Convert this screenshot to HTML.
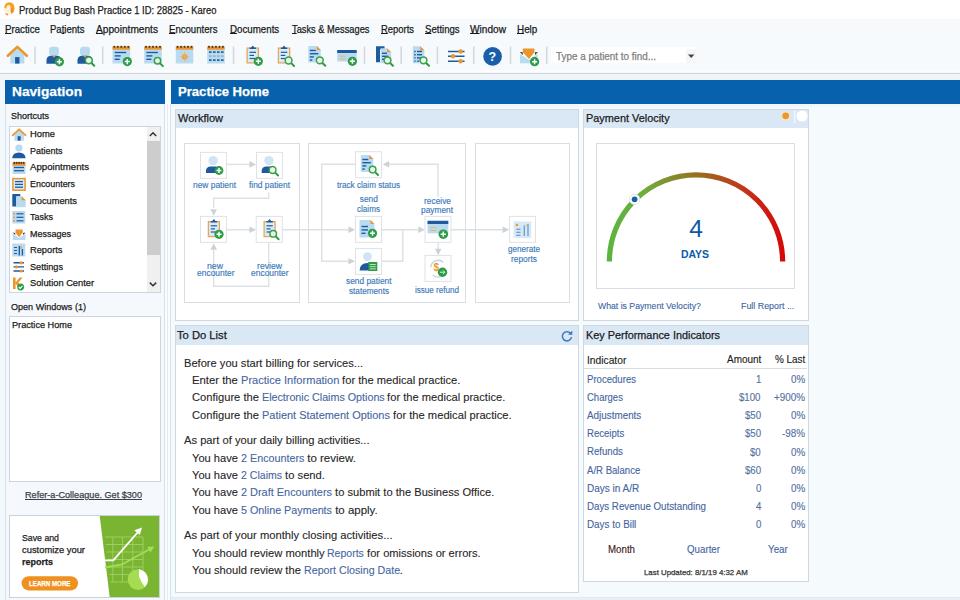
<!DOCTYPE html>
<html><head><meta charset="utf-8"><title>Product Bug Bash Practice 1 ID: 28825 - Kareo</title>
<style>
html,body{margin:0;padding:0;}
body{width:960px;height:600px;overflow:hidden;position:relative;background:#f3f8fd;font-family:"Liberation Sans",sans-serif;color:#1a1a1a;}
.t{position:absolute;white-space:pre;transform-origin:0 50%;-webkit-text-stroke:0.25px currentColor;}
.b{position:absolute;box-sizing:border-box;}
u{text-decoration-thickness:1px;text-underline-offset:0.3px;}
svg{position:absolute;left:0;top:0;}
</style></head><body>
<div class="b" style="left:0px;top:0px;width:960px;height:20px;background:#ffffff;"></div>
<div class="b" style="left:0px;top:19px;width:960px;height:53px;background:#f6fafd;"></div>
<div class="b" style="left:0px;top:70px;width:960px;height:2px;background:#fbfcfe;"></div>
<div class="b" style="left:0px;top:72.7px;width:960px;height:1.2000000000000028px;background:#d2d5d9;"></div>
<div class="b" style="left:0px;top:73.9px;width:960px;height:6.099999999999994px;background:#eff4f9;"></div>
<div class="b" style="left:551px;top:47px;width:145px;height:16.200000000000003px;background:#ffffff;"></div>
<div class="b" style="left:686px;top:48.5px;width:9.5px;height:14.0px;background:#f5f6f8;"></div>
<div class="b" style="left:5px;top:80px;width:160px;height:24px;background:#0761ad;"></div>
<div class="b" style="left:5px;top:104px;width:160px;height:496px;background:#f5f9fd;border:1px solid #d6e0eb;border-top:none;border-bottom:none;"></div>
<div class="b" style="left:9px;top:125.5px;width:152px;height:167.5px;background:#ffffff;border:1px solid #cbd6e2;"></div>
<div class="b" style="left:147px;top:126.5px;width:13px;height:165.5px;background:#f0f0f0;"></div>
<div class="b" style="left:147px;top:141px;width:13px;height:114px;background:#cdcdcd;"></div>
<div class="b" style="left:9px;top:316px;width:152px;height:166px;background:#ffffff;border:1px solid #cbd6e2;"></div>
<div class="b" style="left:9px;top:515px;width:151px;height:83px;background:#ffffff;border:1px solid #c8d2dc;"></div>
<div class="b" style="left:165px;top:80px;width:5px;height:520px;background:#fafcff;"></div>
<div class="b" style="left:167px;top:104px;width:1px;height:496px;background:#e4e9f4;"></div>
<div class="b" style="left:170.5px;top:80px;width:789.5px;height:24px;background:#0761ad;"></div>
<div class="b" style="left:170px;top:104px;width:790px;height:496px;background:#f5fafd;"></div>
<div class="b" style="left:171px;top:596.7px;width:789px;height:1.0px;background:#e3e9f0;"></div>
<div class="b" style="left:171px;top:597.7px;width:789px;height:2.2999999999999545px;background:#e9eff6;"></div>
<div class="b" style="left:170px;top:104px;width:1px;height:496px;background:#d5e2ef;"></div>
<div class="b" style="left:171px;top:104px;width:789px;height:2.5px;background:#eef7fd;"></div>
<div class="b" style="left:174.7px;top:108.5px;width:404.3px;height:212.5px;background:#ffffff;border:1px solid #cfd8e2;"></div>
<div class="b" style="left:175.7px;top:109.5px;width:402.3px;height:18.5px;background:#dae8f6;"></div>
<div class="b" style="left:582.8px;top:108.5px;width:225.9000000000001px;height:212.5px;background:#ffffff;border:1px solid #cfd8e2;"></div>
<div class="b" style="left:583.8px;top:109.5px;width:223.9000000000001px;height:18.5px;background:#dae8f6;"></div>
<div class="b" style="left:174.7px;top:325.3px;width:404.3px;height:267.7px;background:#ffffff;border:1px solid #cfd8e2;"></div>
<div class="b" style="left:175.7px;top:326.3px;width:402.3px;height:18.5px;background:#dae8f6;"></div>
<div class="b" style="left:582.8px;top:325.3px;width:225.9000000000001px;height:256.7px;background:#ffffff;border:1px solid #cfd8e2;"></div>
<div class="b" style="left:583.8px;top:326.3px;width:223.9000000000001px;height:18.5px;background:#dae8f6;"></div>
<div class="b" style="left:184px;top:143px;width:116px;height:160px;border:1px solid #d9dee3;"></div>
<div class="b" style="left:308px;top:143px;width:158px;height:160px;border:1px solid #d9dee3;"></div>
<div class="b" style="left:475px;top:143px;width:95px;height:160px;border:1px solid #d9dee3;"></div>
<div class="b" style="left:596px;top:143px;width:199px;height:145.5px;border:1px solid #d9dee3;"></div>
<div class="b" style="left:584px;top:368px;width:223px;height:1.3000000000000114px;background:#d9dcdf;"></div>
<svg width="960" height="600" viewBox="0 0 960 600">
<defs><linearGradient id="gg" x1="609" y1="0" x2="783" y2="0" gradientUnits="userSpaceOnUse"><stop offset="0" stop-color="#5db33f"/><stop offset="0.2" stop-color="#6dae3c"/><stop offset="0.5" stop-color="#98701f"/><stop offset="0.8" stop-color="#c4301a"/><stop offset="1" stop-color="#d60808"/></linearGradient></defs>
<circle cx="9.2" cy="8.8" r="5.2" fill="#fdf0d9"/><path d="M4.3 7.8Q4.6 2.6 9.4 2.2Q14.6 2.8 14.6 8.4Q14.400 12.200 11.700 14.200Q9.800 11.200 10.700 8.200Q11 5.400 8.600 5Q6.300 5.200 6.300 7.900Q5.300 8.600 4.300 7.800Z" fill="#f1a124"/><path d="M10.9 7.500q1.900 0.300 2.200 2.600q-0.200 2-1.500 3.200q-1.300-2.600-0.700-5.800z" fill="#f08c1c"/><ellipse cx="6.800" cy="14.300" rx="1.700" ry="0.900" fill="#dc9a3a" transform="rotate(25 6.800 14.300)"/><rect x="34.25" y="46.5" width="1.5" height="17.5" fill="#d2d7dc"/><rect x="102.0" y="46.5" width="1.5" height="17.5" fill="#d2d7dc"/><rect x="232.85" y="46.5" width="1.5" height="17.5" fill="#d2d7dc"/><rect x="363.75" y="46.5" width="1.5" height="17.5" fill="#d2d7dc"/><rect x="400.45" y="46.5" width="1.5" height="17.5" fill="#d2d7dc"/><rect x="436.65" y="46.5" width="1.5" height="17.5" fill="#d2d7dc"/><rect x="473.05" y="46.5" width="1.5" height="17.5" fill="#d2d7dc"/><rect x="509.75" y="46.5" width="1.5" height="17.5" fill="#d2d7dc"/><rect x="545.95" y="46.5" width="1.5" height="17.5" fill="#d2d7dc"/><g transform="translate(6.8,45.6) scale(1.0)"><path d="M3.5 9.5V18H17.5V9.5L10.5 3z" fill="#b9dbf1"/><rect x="8.3" y="11.5" width="4.4" height="6.5" fill="#1d5a9e"/><path d="M1 10.2L10.5 1.3L20 10.2" fill="none" stroke="#eb962c" stroke-width="2.6" stroke-linejoin="round" stroke-linecap="round"/></g><rect x="49" y="46.8" width="10" height="9" rx="3" fill="#b9dbf1"/><path d="M46.5 63.8v-3.5q0-4 4-4.5h7q4 0.5 4 4.5v3.5z" fill="#1d5a9e"/><path d="M52 55.8h4l-2 2z" fill="#eb962c"/><circle cx="59.4" cy="61.8" r="4.6" fill="#2c9c45"/><path d="M56.87 61.8H61.93M59.4 59.269999999999996V64.33" stroke="#fff" stroke-width="1.5"/><rect x="80" y="46.8" width="10" height="9" rx="3" fill="#b9dbf1"/><path d="M77.5 63.8v-3.5q0-4 4-4.5h7q4 0.5 4 4.5v3.5z" fill="#1d5a9e"/><path d="M83 55.8h4l-2 2z" fill="#eb962c"/><path d="M91.17999999999999 62.68L94.27999999999999 65.78" stroke="#2c9c45" stroke-width="2" stroke-linecap="round"/><circle cx="88.8" cy="60.3" r="3.4" fill="#e9f5ea" stroke="#3aa04a" stroke-width="1.5"/><rect x="112.5" y="47.5" width="17.6" height="16" fill="#b9dbf1"/><rect x="112.5" y="46.5" width="17.6" height="3.2" fill="#eb962c"/><circle cx="114.3" cy="46.8" r="1.1" fill="#5a3a18"/><circle cx="117.8" cy="46.8" r="1.1" fill="#5a3a18"/><circle cx="121.3" cy="46.8" r="1.1" fill="#5a3a18"/><circle cx="124.8" cy="46.8" r="1.1" fill="#5a3a18"/><circle cx="128.3" cy="46.8" r="1.1" fill="#5a3a18"/><path d="M114.7 52.5h11.5" stroke="#1d5a9e" stroke-width="1.4"/><path d="M114.7 55.9h6" stroke="#1d5a9e" stroke-width="1.4"/><path d="M114.7 59.3h5" stroke="#1d5a9e" stroke-width="1.4"/><circle cx="127.3" cy="61.6" r="4.6" fill="#2c9c45"/><path d="M124.77 61.6H129.82999999999998M127.3 59.07V64.13" stroke="#fff" stroke-width="1.5"/><rect x="144.2" y="47.5" width="17.6" height="16" fill="#b9dbf1"/><rect x="144.2" y="46.5" width="17.6" height="3.2" fill="#eb962c"/><circle cx="146.0" cy="46.8" r="1.1" fill="#5a3a18"/><circle cx="149.5" cy="46.8" r="1.1" fill="#5a3a18"/><circle cx="153.0" cy="46.8" r="1.1" fill="#5a3a18"/><circle cx="156.5" cy="46.8" r="1.1" fill="#5a3a18"/><circle cx="160.0" cy="46.8" r="1.1" fill="#5a3a18"/><path d="M146.4 52.5h11.5" stroke="#1d5a9e" stroke-width="1.4"/><path d="M146.4 55.9h6" stroke="#1d5a9e" stroke-width="1.4"/><path d="M146.4 59.3h5" stroke="#1d5a9e" stroke-width="1.4"/><path d="M159.74 63.04L162.84 66.14" stroke="#2c9c45" stroke-width="2" stroke-linecap="round"/><circle cx="157.5" cy="60.8" r="3.2" fill="#e9f5ea" stroke="#3aa04a" stroke-width="1.5"/><rect x="175.8" y="47.5" width="17.5" height="16" fill="#b9dbf1"/><rect x="175.8" y="46.5" width="17.5" height="3.2" fill="#eb962c"/><circle cx="177.60000000000002" cy="46.8" r="1.1" fill="#5a3a18"/><circle cx="181.07500000000002" cy="46.8" r="1.1" fill="#5a3a18"/><circle cx="184.55" cy="46.8" r="1.1" fill="#5a3a18"/><circle cx="188.02500000000003" cy="46.8" r="1.1" fill="#5a3a18"/><circle cx="191.50000000000003" cy="46.8" r="1.1" fill="#5a3a18"/><circle cx="184.6" cy="56.8" r="2.6" fill="#eb962c"/><path d="M184.6 52v9.6M179.8 56.8h9.6M181.2 53.4l6.8 6.8M188 53.4l-6.8 6.8" stroke="#f0b060" stroke-width="0.9"/><rect x="207.2" y="47.5" width="17.5" height="16" fill="#b9dbf1"/><rect x="207.2" y="46.5" width="17.5" height="3.2" fill="#eb962c"/><circle cx="209.0" cy="46.8" r="1.1" fill="#5a3a18"/><circle cx="212.475" cy="46.8" r="1.1" fill="#5a3a18"/><circle cx="215.95" cy="46.8" r="1.1" fill="#5a3a18"/><circle cx="219.425" cy="46.8" r="1.1" fill="#5a3a18"/><circle cx="222.9" cy="46.8" r="1.1" fill="#5a3a18"/><rect x="209" y="51.3" width="2.6" height="1.6" fill="#1d5a9e"/><rect x="213" y="51.3" width="2.6" height="1.6" fill="#1d5a9e"/><rect x="217" y="51.3" width="2.6" height="1.6" fill="#1d5a9e"/><rect x="221" y="51.3" width="2.6" height="1.6" fill="#1d5a9e"/><rect x="209" y="55.3" width="2.6" height="1.6" fill="#9ab0b8"/><rect x="213" y="55.3" width="2.6" height="1.6" fill="#9ab0b8"/><rect x="217" y="55.3" width="2.6" height="1.6" fill="#9ab0b8"/><rect x="221" y="55.3" width="2.6" height="1.6" fill="#9ab0b8"/><rect x="209" y="59.3" width="2.6" height="1.6" fill="#1d5a9e"/><rect x="213" y="59.3" width="2.6" height="1.6" fill="#1d5a9e"/><rect x="217" y="59.3" width="2.6" height="1.6" fill="#1d5a9e"/><rect x="221" y="59.3" width="2.6" height="1.6" fill="#1d5a9e"/><rect x="247.1" y="48.1" width="11.3" height="14.8" fill="#d9ebf8" stroke="#e9a55a" stroke-width="1.3"/><path d="M249.55 49.1h6.4v-1.6h-1.6l-1.6-2l-1.6 2h-1.6z" fill="#1d5a9e"/><path d="M249.5 52.3h6.5" stroke="#1d5a9e" stroke-width="1.2"/><path d="M249.5 55.4h4.5" stroke="#1d5a9e" stroke-width="1.2"/><path d="M249.5 58.5h5.5" stroke="#1d5a9e" stroke-width="1.2"/><circle cx="258.3" cy="61.3" r="4.6" fill="#2c9c45"/><path d="M255.77 61.3H260.83M258.3 58.769999999999996V63.83" stroke="#fff" stroke-width="1.5"/><rect x="278.40000000000003" y="48.1" width="11.3" height="14.8" fill="#d9ebf8" stroke="#e9a55a" stroke-width="1.3"/><path d="M280.85 49.1h6.4v-1.6h-1.6l-1.6-2l-1.6 2h-1.6z" fill="#1d5a9e"/><path d="M280.8 52.3h6.5" stroke="#1d5a9e" stroke-width="1.2"/><path d="M280.8 55.4h4.5" stroke="#1d5a9e" stroke-width="1.2"/><path d="M280.8 58.5h5.5" stroke="#1d5a9e" stroke-width="1.2"/><path d="M290.98 62.88L294.08000000000004 65.98" stroke="#2c9c45" stroke-width="2" stroke-linecap="round"/><circle cx="288.6" cy="60.5" r="3.4" fill="#e9f5ea" stroke="#3aa04a" stroke-width="1.5"/><path d="M308.3 46h8.5l4 4v12.5h-12.5z" fill="#b9dbf1"/><path d="M316.8 46l4 4h-4z" fill="#eb962c"/><path d="M309.8 50.5h6" stroke="#1d5a9e" stroke-width="1.4"/><path d="M309.8 53.7h8.5" stroke="#1d5a9e" stroke-width="1.4"/><path d="M309.8 56.9h4" stroke="#1d5a9e" stroke-width="1.4"/><path d="M309.8 60.1h2.5" stroke="#1d5a9e" stroke-width="1.4"/><path d="M322.18 62.68L325.28000000000003 65.78" stroke="#2c9c45" stroke-width="2" stroke-linecap="round"/><circle cx="319.8" cy="60.3" r="3.4" fill="#e9f5ea" stroke="#3aa04a" stroke-width="1.5"/><rect x="337.2" y="50" width="19.5" height="11.5" fill="#b9dbf1"/><rect x="337.2" y="50" width="19.5" height="3" fill="#1d5a9e"/><path d="M339.5 56.2h6M339.5 58.8h6" stroke="#e8b878" stroke-width="1.2"/><circle cx="352.4" cy="61.3" r="4.6" fill="#2c9c45"/><path d="M349.87 61.3H354.92999999999995M352.4 58.769999999999996V63.83" stroke="#fff" stroke-width="1.5"/><path d="M376 46.3h8.5v3h-4.5v13h-4z" fill="#1d5a9e"/><path d="M380.6 48.3h6.5l4 4v11h-10.5z" fill="#b9dbf1"/><path d="M387.1 48.3l4 4h-4z" fill="#eb962c"/><path d="M382 53.3h5" stroke="#1d5a9e" stroke-width="1.4"/><path d="M382 56.3h6.5" stroke="#1d5a9e" stroke-width="1.4"/><path d="M382 59.3h4" stroke="#1d5a9e" stroke-width="1.4"/><path d="M389.88 62.68L392.98 65.78" stroke="#2c9c45" stroke-width="2" stroke-linecap="round"/><circle cx="387.5" cy="60.3" r="3.4" fill="#e9f5ea" stroke="#3aa04a" stroke-width="1.5"/><path d="M412.8 46.3h7.5l4 4v13h-11.5z" fill="#b9dbf1"/><path d="M420.3 46.3l4 4h-4z" fill="#eb962c"/><path d="M414.2 51.5h1.5" stroke="#1d5a9e" stroke-width="1.4"/><path d="M414.2 54.7h1.5" stroke="#1d5a9e" stroke-width="1.4"/><path d="M414.2 57.9h1.5" stroke="#1d5a9e" stroke-width="1.4"/><path d="M414.2 61.1h1.5" stroke="#1d5a9e" stroke-width="1.4"/><path d="M417 51.5h5" stroke="#1d5a9e" stroke-width="1.4"/><path d="M417 54.7h5" stroke="#1d5a9e" stroke-width="1.4"/><path d="M417 57.9h4" stroke="#1d5a9e" stroke-width="1.4"/><path d="M417 61.1h2" stroke="#1d5a9e" stroke-width="1.4"/><path d="M425.88 62.68L428.98 65.78" stroke="#2c9c45" stroke-width="2" stroke-linecap="round"/><circle cx="423.5" cy="60.3" r="3.4" fill="#e9f5ea" stroke="#3aa04a" stroke-width="1.5"/><path d="M448 51.5h16.5M448 56.3h16.5M448 61.3h16.5" stroke="#1d5a9e" stroke-width="1.5"/><circle cx="460.6" cy="51.5" r="2.2" fill="#eb962c"/><circle cx="453" cy="56.3" r="2.2" fill="#eb962c"/><circle cx="460.6" cy="61.3" r="2.2" fill="#eb962c"/><circle cx="492.6" cy="56.4" r="9.3" fill="#1a5fa8"/><path d="M520 53.8l9 6.200l8.500-6.200v9.500h-17.500z" fill="#b9dbf1"/><path d="M519.800 52l3 0.300v2.600zM538 52l-3 0.300v2.600z" fill="#3a3a3a"/><path d="M522.800 48.600h11.600v3.600l-5.400 6.800l-6.200-6.800z" fill="#eb962c"/><circle cx="534.6" cy="61.7" r="4.6" fill="#2c9c45"/><path d="M532.07 61.7H537.13M534.6 59.17V64.23" stroke="#fff" stroke-width="1.5"/><path d="M688 54.5h6.4l-3.2 3.6z" fill="#444"/><path d="M570.6 333.5a4.6 4.6 0 1 0 0.9 3.6" fill="none" stroke="#3b78c0" stroke-width="1.5"/><path d="M572.3 330.5v4.3h-4.3z" fill="#3b78c0"/><path d="M149.8 136l3.2-3.2l3.2 3.2" fill="none" stroke="#333" stroke-width="1.5"/><path d="M149.8 282.6l3.2 3.2l3.2-3.2" fill="none" stroke="#333" stroke-width="1.5"/><g transform="translate(12,128.4) scale(0.68)"><path d="M3.5 9.5V18H17.5V9.5L10.5 3z" fill="#b9dbf1"/><rect x="8.3" y="11.5" width="4.4" height="6.5" fill="#1d5a9e"/><path d="M1 10.2L10.5 1.3L20 10.2" fill="none" stroke="#eb962c" stroke-width="2.6" stroke-linejoin="round" stroke-linecap="round"/></g><circle cx="18.9" cy="148" r="3.6" fill="#b9dbf1"/><path d="M12.2 158.2q0.3-5.6 6.7-5.8q6.4 0.2 6.7 5.8z" fill="#1d5a9e"/><rect x="12.5" y="163.5" width="13" height="10.5" fill="#b9dbf1"/><rect x="12.5" y="162.5" width="13" height="3.2" fill="#eb962c"/><circle cx="14.3" cy="162.8" r="1.1" fill="#5a3a18"/><circle cx="16.650000000000002" cy="162.8" r="1.1" fill="#5a3a18"/><circle cx="19.0" cy="162.8" r="1.1" fill="#5a3a18"/><circle cx="21.35" cy="162.8" r="1.1" fill="#5a3a18"/><circle cx="23.700000000000003" cy="162.8" r="1.1" fill="#5a3a18"/><path d="M14 167.5h10" stroke="#1d5a9e" stroke-width="1.3"/><path d="M14 170.7h10" stroke="#1d5a9e" stroke-width="1.3"/><rect x="12.9" y="178.6" width="12.2" height="11.6" fill="#d9ebf8" stroke="#eb962c" stroke-width="1.5"/><path d="M15 181.6h8" stroke="#1d5a9e" stroke-width="1.3"/><path d="M15 184.4h8" stroke="#1d5a9e" stroke-width="1.3"/><path d="M15 187.2h8" stroke="#1d5a9e" stroke-width="1.3"/><path d="M12.3 194h8v2.5h-4v10h-4z" fill="#1d5a9e"/><path d="M16.2 196.3h5.5l4 4v7h-9.5z" fill="#b9dbf1"/><path d="M21.7 196.3l4 4h-4z" fill="#eb962c"/><rect x="12.3" y="211" width="13" height="12.5" fill="#b9dbf1"/><path d="M16.5 213.8h7" stroke="#1d5a9e" stroke-width="1.2"/><path d="M16.5 217.3h7" stroke="#1d5a9e" stroke-width="1.2"/><path d="M16.5 220.8h7" stroke="#1d5a9e" stroke-width="1.2"/><rect x="13.2" y="213.1" width="1.6" height="1.6" fill="#eb962c"/><rect x="13.2" y="216.6" width="1.6" height="1.6" fill="#eb962c"/><rect x="13.2" y="220.1" width="1.6" height="1.6" fill="#eb962c"/><path d="M12.700 233.800l6.400 4.300l6.400-4.300v6.300h-12.800z" fill="#b9dbf1"/><path d="M12.600 232.600l2.600 0.300v2zM25.600 232.600l-2.600 0.300v2z" fill="#3a3a3a"/><path d="M15.500 229.600h7.200v3l-3.600 4.700l-3.600-4.700z" fill="#eb962c"/><rect x="12.3" y="243.5" width="13" height="13" fill="#b9dbf1"/><path d="M19.3 246v9.5M22.4 249v6.5" stroke="#1d5a9e" stroke-width="1.3"/><path d="M14 247.5h3M14 250.5h3M14 253.5h3" stroke="#1d5a9e" stroke-width="1"/><path d="M21 246v3" stroke="#eb962c" stroke-width="1.2"/><path d="M13.500 262.800h10.500M13.500 266.900h10.500M13.500 271h10.500" stroke="#1d5a9e" stroke-width="1.400"/><circle cx="21.3" cy="262.8" r="1.600" fill="#eb962c"/><circle cx="16.2" cy="266.9" r="1.600" fill="#eb962c"/><circle cx="21.3" cy="271" r="1.600" fill="#eb962c"/><path d="M13 277.5h2.6v5l4-5h3l-4.3 5.2l4.7 6.3h-3.2l-4.2-5.6v5.6h-2.6z" fill="#eb962c"/><circle cx="20.6" cy="287" r="3.4" fill="#2c9c45"/><path d="M18.8 287l1.4 1.4l2.2-2.6" fill="none" stroke="#fff" stroke-width="1.1"/><path d="M227 164.4H250" fill="none" stroke="#dbe1e5" stroke-width="1.4"/><path d="M256 164.4l-6.5-3.3v6.6z" fill="#cbd3d8"/><path d="M268.7 192.5V198.2H213.7V208" fill="none" stroke="#dbe1e5" stroke-width="1.4"/><path d="M213.7 215.8l-3.3-6.5h6.6z" fill="#cbd3d8"/><path d="M227 229.8H250" fill="none" stroke="#dbe1e5" stroke-width="1.4"/><path d="M256 229.8l-6.5-3.3v6.6z" fill="#cbd3d8"/><path d="M268.7 243V286.2H213.7V250" fill="none" stroke="#dbe1e5" stroke-width="1.4"/><path d="M213.7 243.3l-3.3 6.5h6.6z" fill="#cbd3d8"/><path d="M282 229.8H349" fill="none" stroke="#dbe1e5" stroke-width="1.4"/><path d="M355 229.8l-6.5-3.3v6.6z" fill="#cbd3d8"/><path d="M382 229.8H418" fill="none" stroke="#dbe1e5" stroke-width="1.4"/><path d="M424.8 229.8l-6.5-3.3v6.6z" fill="#cbd3d8"/><path d="M382 261.3H402.8V229.8" fill="none" stroke="#dbe1e5" stroke-width="1.4"/><path d="M438 196.7V164.2H389" fill="none" stroke="#dbe1e5" stroke-width="1.4"/><path d="M382.6 164.2l6.5-3.3v6.6z" fill="#cbd3d8"/><path d="M355 164.2H321.7V261.3H349" fill="none" stroke="#dbe1e5" stroke-width="1.4"/><path d="M355 261.3l-6.5-3.3v6.6z" fill="#cbd3d8"/><path d="M451 229.8H503" fill="none" stroke="#dbe1e5" stroke-width="1.4"/><path d="M509.2 229.8l-6.5-3.3v6.6z" fill="#cbd3d8"/><path d="M438.2 242.5V249" fill="none" stroke="#dbe1e5" stroke-width="1.4"/><path d="M438.2 255.3l-3.3-6.5h6.6z" fill="#cbd3d8"/><rect x="200.5" y="152.4" width="26" height="26" fill="#fff" stroke="#dfe2e6" stroke-width="1"/><rect x="256.5" y="152.4" width="26" height="26" fill="#fff" stroke="#dfe2e6" stroke-width="1"/><rect x="200.5" y="216.4" width="26" height="26" fill="#fff" stroke="#dfe2e6" stroke-width="1"/><rect x="256.2" y="216.4" width="26" height="26" fill="#fff" stroke="#dfe2e6" stroke-width="1"/><rect x="355.5" y="151.7" width="26" height="26" fill="#fff" stroke="#dfe2e6" stroke-width="1"/><rect x="355.5" y="216.4" width="26" height="26" fill="#fff" stroke="#dfe2e6" stroke-width="1"/><rect x="355.5" y="248.6" width="26" height="26" fill="#fff" stroke="#dfe2e6" stroke-width="1"/><rect x="425" y="216.4" width="26" height="26" fill="#fff" stroke="#dfe2e6" stroke-width="1"/><rect x="425" y="255.4" width="26" height="26" fill="#fff" stroke="#dfe2e6" stroke-width="1"/><rect x="509.5" y="216.4" width="26" height="26" fill="#fff" stroke="#dfe2e6" stroke-width="1"/><circle cx="213.2" cy="160.6" r="4.7" fill="#cfe5f5"/><path d="M206 173.1v-2.2q0-4 4-4.5h6q4 0.5 4 4.5v2.2z" fill="#1d5a9e"/><circle cx="219" cy="170.5" r="4.4" fill="#2c9c45"/><path d="M216.58 170.5H221.42M219 168.08V172.92" stroke="#fff" stroke-width="1.5"/><circle cx="268.9" cy="160.6" r="4.7" fill="#cfe5f5"/><path d="M261.7 173.1v-2.2q0-4 4-4.5h6q4 0.5 4 4.5v2.2z" fill="#1d5a9e"/><path d="M274.98 172.38L278.08000000000004 175.48" stroke="#2c9c45" stroke-width="2" stroke-linecap="round"/><circle cx="272.6" cy="170" r="3.4" fill="#e9f5ea" stroke="#3aa04a" stroke-width="1.5"/><rect x="208.4" y="221.6" width="11.0" height="15.0" fill="#d9ebf8" stroke="#e9a55a" stroke-width="1.3"/><path d="M210.70000000000002 222.6h6.4v-1.6h-1.6l-1.6-2l-1.6 2h-1.6z" fill="#1d5a9e"/><path d="M210.8 225.8h6.199999999999999" stroke="#1d5a9e" stroke-width="1.2"/><path d="M210.8 228.9h4.199999999999999" stroke="#1d5a9e" stroke-width="1.2"/><path d="M210.8 232.0h5.199999999999999" stroke="#1d5a9e" stroke-width="1.2"/><circle cx="219" cy="234.3" r="4.6" fill="#2c9c45"/><path d="M216.47 234.3H221.53M219 231.77V236.83" stroke="#fff" stroke-width="1.5"/><rect x="264.1" y="221.6" width="11.0" height="15.0" fill="#d9ebf8" stroke="#e9a55a" stroke-width="1.3"/><path d="M266.40000000000003 222.6h6.4v-1.6h-1.6l-1.6-2l-1.6 2h-1.6z" fill="#1d5a9e"/><path d="M266.5 225.8h6.199999999999999" stroke="#1d5a9e" stroke-width="1.2"/><path d="M266.5 228.9h4.199999999999999" stroke="#1d5a9e" stroke-width="1.2"/><path d="M266.5 232.0h5.199999999999999" stroke="#1d5a9e" stroke-width="1.2"/><path d="M275.51 236.11L278.61 239.21" stroke="#2c9c45" stroke-width="2" stroke-linecap="round"/><circle cx="273.2" cy="233.8" r="3.3" fill="#e9f5ea" stroke="#3aa04a" stroke-width="1.5"/><path d="M360.8 155h8.5l4 4v13h-12.5z" fill="#b9dbf1"/><path d="M369.3 155l4 4h-4z" fill="#eb962c"/><path d="M362.3 159.5h6" stroke="#1d5a9e" stroke-width="1.4"/><path d="M362.3 162.7h8.5" stroke="#1d5a9e" stroke-width="1.4"/><path d="M362.3 165.9h4" stroke="#1d5a9e" stroke-width="1.4"/><path d="M362.3 169.1h2.5" stroke="#1d5a9e" stroke-width="1.4"/><path d="M374.91 171.91L378.01000000000005 175.01" stroke="#2c9c45" stroke-width="2" stroke-linecap="round"/><circle cx="372.6" cy="169.6" r="3.3" fill="#e9f5ea" stroke="#3aa04a" stroke-width="1.5"/><path d="M359.5 220h11l4 4v13.5h-15z" fill="#b9dbf1"/><path d="M370.5 220l4 4h-4z" fill="#eb962c"/><path d="M361.5 226.5h6.5" stroke="#1d5a9e" stroke-width="1.4"/><path d="M361.5 229.9h6.5" stroke="#1d5a9e" stroke-width="1.4"/><path d="M361.5 233.3h4" stroke="#1d5a9e" stroke-width="1.4"/><circle cx="372.5" cy="233.3" r="4.6" fill="#2c9c45"/><path d="M369.97 233.3H375.03M372.5 230.77V235.83" stroke="#fff" stroke-width="1.5"/><circle cx="367.5" cy="256.6" r="4.4" fill="#cfe5f5"/><path d="M359.5 270.5q0.3-7.2 8-7.5q7.7 0.3 8 7.5z" fill="#1d5a9e"/><rect x="368.3" y="262" width="9" height="9" fill="#2c9c45"/><path d="M369.8 264.5h6M369.8 266.7h6M369.8 268.9h6" stroke="#cfe8d2" stroke-width="0.9"/><rect x="427.5" y="220.8" width="20.8" height="12.5" fill="#b9dbf1"/><rect x="427.5" y="220.8" width="20.8" height="3.2" fill="#1d5a9e"/><path d="M430 227.5h6.5M430 230.3h6.5" stroke="#e8b878" stroke-width="1.2"/><circle cx="443.3" cy="234.2" r="4.8" fill="#2c9c45"/><path d="M440.66 234.2H445.94M443.3 231.56V236.83999999999997" stroke="#fff" stroke-width="1.5"/><path d="M430.8 267.5a7.4 7.4 0 0 1 12.4-5.2M445.3 269.5a7.4 7.4 0 0 1-12.4 5.6" fill="none" stroke="#bfd3e2" stroke-width="1.3"/><text x="436.3" y="270.6" font-family="Liberation Sans, sans-serif" font-size="10" font-weight="700" fill="#eb962c" text-anchor="middle">$</text><circle cx="442.5" cy="272.2" r="4.7" fill="#2c9c45"/><path d="M440 272.2h4.6M443 270.4l1.8 1.8l-1.8 1.8" fill="none" stroke="#d8f0dc" stroke-width="1"/><rect x="513.600" y="221.500" width="17.600" height="16.500" fill="#d6e9f6"/><path d="M524.300 225.500v10.500M528 224v12" stroke="#6f9ccb" stroke-width="1.300"/><path d="M516.300 229.300h4.200M516.300 232.300h4.200M516.300 235.200h4.200" stroke="#4f86c0" stroke-width="1.100"/><circle cx="516.900" cy="225" r="1.300" fill="#eb962c"/><path d="M526.200 224v2.500" stroke="#f0c088" stroke-width="1"/><path d="M609.4 261.4A86.6 86.6 0 0 1 782.6 261.4" fill="none" stroke="url(#gg)" stroke-width="5.2"/><circle cx="634.6" cy="199.3" r="5.2" fill="#fff" stroke="#d5dde4" stroke-width="0.8"/><circle cx="634.6" cy="199.3" r="2.9" fill="#1a5fa8"/><circle cx="802" cy="116" r="5.6" fill="#fff"/><rect x="794" y="110" width="1.2" height="13" fill="#f4f9fd"/><circle cx="785.7" cy="115.8" r="4.6" fill="#f6e6cf"/><circle cx="785.7" cy="115.8" r="3.4" fill="#ee982a"/><path d="M99.7 516H159V597H109.7z" fill="#7ab532"/><path d="M112.8 537V582M122.5 537V582M132.8 537V582M143 537V582M104.9 537H143M105.8 544.5H143M106.7 552H143M107.7 559.5H143M108.6 567H143M109.5 574.5H143M110.4 582H143" stroke="#a3cf6a" stroke-width="0.9" fill="none"/><path d="M105 567.5L122 564.5L150 549" fill="none" stroke="#a6dc55" stroke-width="1.8"/><path d="M154.5 546.3l-7.2 0.6l3.2 5.6z" fill="#a6dc55"/><path d="M103.6 560.3H113.3L138 532" fill="none" stroke="#fff" stroke-width="1.8"/><path d="M142 527.6l-7.6 2.6l5.4 4.8z" fill="#fff"/><circle cx="138" cy="579.6" r="10.3" fill="#a5dc52"/><path d="M139 569q9 2.5 9 11.5q-0.5 4-3.2 6.500q-3.600-4.500-5.800-10.500z" fill="#fff"/><rect x="21.6" y="576.2" width="56.4" height="14.2" rx="7.1" fill="#f0901f"/></svg>
<div class="t" style="left:18.80px;top:2.56px;font-size:10.5px;line-height:14px;transform:scaleX(0.8975);">Product Bug Bash Practice 1 ID: 28825 - Kareo</div>
<div class="t" style="left:5.00px;top:22.43px;font-size:10.6px;line-height:14px;transform:scaleX(0.9143);"><u>P</u>ractice</div>
<div class="t" style="left:50.00px;top:22.43px;font-size:10.6px;line-height:14px;transform:scaleX(0.9012);">Pa<u>t</u>ients</div>
<div class="t" style="left:96.00px;top:22.43px;font-size:10.6px;line-height:14px;transform:scaleX(0.9571);"><u>A</u>ppointments</div>
<div class="t" style="left:169.00px;top:22.43px;font-size:10.6px;line-height:14px;transform:scaleX(0.9050);"><u>E</u>ncounters</div>
<div class="t" style="left:229.60px;top:22.43px;font-size:10.6px;line-height:14px;transform:scaleX(0.9180);"><u>D</u>ocuments</div>
<div class="t" style="left:291.50px;top:22.43px;font-size:10.6px;line-height:14px;transform:scaleX(0.8774);"><u>T</u>asks &amp; Messages</div>
<div class="t" style="left:381.00px;top:22.43px;font-size:10.6px;line-height:14px;transform:scaleX(0.8896);"><u>R</u>eports</div>
<div class="t" style="left:425.40px;top:22.43px;font-size:10.6px;line-height:14px;transform:scaleX(0.9038);"><u>S</u>ettings</div>
<div class="t" style="left:470.00px;top:22.43px;font-size:10.6px;line-height:14px;transform:scaleX(0.9552);"><u>W</u>indow</div>
<div class="t" style="left:516.70px;top:22.43px;font-size:10.6px;line-height:14px;transform:scaleX(0.9313);"><u>H</u>elp</div>
<div class="t" style="left:488.48px;top:48.67px;font-size:12.5px;line-height:16px;font-weight:700;color:#fff;-webkit-text-stroke:0;">?</div>
<div class="t" style="left:556.00px;top:50.10px;font-size:10.4px;line-height:14px;transform:scaleX(0.9511);color:#808080;">Type a patient to find...</div>
<div class="t" style="left:12.00px;top:82.62px;font-size:13.5px;line-height:18px;font-weight:700;transform:scaleX(1.0143);color:#fff;">Navigation</div>
<div class="t" style="left:178.00px;top:82.62px;font-size:13.5px;line-height:18px;font-weight:700;transform:scaleX(0.9702);color:#fff;">Practice Home</div>
<div class="t" style="left:11.00px;top:109.30px;font-size:9.8px;line-height:13px;transform:scaleX(0.9181);">Shortcuts</div>
<div class="t" style="left:30.00px;top:127.30px;font-size:9.8px;line-height:13px;transform:scaleX(0.9564);">Home</div>
<div class="t" style="left:30.00px;top:143.85px;font-size:9.8px;line-height:13px;transform:scaleX(0.9179);">Patients</div>
<div class="t" style="left:30.00px;top:160.40px;font-size:9.8px;line-height:13px;transform:scaleX(0.9849);">Appointments</div>
<div class="t" style="left:30.00px;top:176.95px;font-size:9.8px;line-height:13px;transform:scaleX(0.9079);">Encounters</div>
<div class="t" style="left:30.00px;top:193.50px;font-size:9.8px;line-height:13px;transform:scaleX(0.9483);">Documents</div>
<div class="t" style="left:30.00px;top:210.05px;font-size:9.8px;line-height:13px;transform:scaleX(0.9183);">Tasks</div>
<div class="t" style="left:30.00px;top:226.60px;font-size:9.8px;line-height:13px;transform:scaleX(0.9181);">Messages</div>
<div class="t" style="left:30.00px;top:243.15px;font-size:9.8px;line-height:13px;transform:scaleX(0.9472);">Reports</div>
<div class="t" style="left:30.00px;top:259.70px;font-size:9.8px;line-height:13px;transform:scaleX(0.9320);">Settings</div>
<div class="t" style="left:30.00px;top:276.25px;font-size:9.8px;line-height:13px;transform:scaleX(0.9477);">Solution Center</div>
<div class="t" style="left:11.00px;top:299.50px;font-size:9.8px;line-height:13px;transform:scaleX(0.9243);">Open Windows (1)</div>
<div class="t" style="left:11.70px;top:317.90px;font-size:9.8px;line-height:13px;transform:scaleX(0.9339);">Practice Home</div>
<div class="t" style="left:24.80px;top:487.90px;font-size:9.8px;line-height:13px;transform:scaleX(0.9300);color:#3c3e4a;text-decoration:underline;">Refer-a-Colleague. Get $300</div>
<div class="t" style="left:22.00px;top:531.10px;font-size:9.8px;line-height:13px;transform:scaleX(0.8936);color:#222;">Save and</div>
<div class="t" style="left:22.00px;top:543.10px;font-size:9.8px;line-height:13px;transform:scaleX(0.9561);color:#222;">customize your</div>
<div class="t" style="left:22.00px;top:555.10px;font-size:9.8px;line-height:13px;font-weight:700;transform:scaleX(0.9181);color:#222;">reports</div>
<div class="t" style="left:29.15px;top:578.84px;font-size:6.8px;line-height:9px;font-weight:700;transform:scaleX(0.9080);color:#fff;">LEARN MORE</div>
<div class="t" style="left:177.60px;top:111.25px;font-size:11.4px;line-height:15px;transform:scaleX(0.9651);">Workflow</div>
<div class="t" style="left:585.60px;top:111.25px;font-size:11.4px;line-height:15px;transform:scaleX(0.9568);">Payment Velocity</div>
<div class="t" style="left:176.90px;top:328.25px;font-size:11.4px;line-height:15px;transform:scaleX(0.9831);">To Do List</div>
<div class="t" style="left:585.80px;top:328.05px;font-size:11.4px;line-height:15px;transform:scaleX(0.9533);">Key Performance Indicators</div>
<div class="t" style="left:192.50px;top:179.92px;font-size:8.3px;line-height:11px;transform:scaleX(1.0133);color:#3b79ba;-webkit-text-stroke:0.15px currentColor;">new patient</div>
<div class="t" style="left:248.50px;top:179.92px;font-size:8.3px;line-height:11px;transform:scaleX(1.0100);color:#3b79ba;-webkit-text-stroke:0.15px currentColor;">find patient</div>
<div class="t" style="left:207.00px;top:261.32px;font-size:8.3px;line-height:11px;transform:scaleX(1.0503);color:#3b79ba;-webkit-text-stroke:0.15px currentColor;">new</div>
<div class="t" style="left:196.50px;top:267.82px;font-size:8.3px;line-height:11px;transform:scaleX(1.0188);color:#3b79ba;-webkit-text-stroke:0.15px currentColor;">encounter</div>
<div class="t" style="left:256.80px;top:261.32px;font-size:8.3px;line-height:11px;transform:scaleX(1.0423);color:#3b79ba;-webkit-text-stroke:0.15px currentColor;">review</div>
<div class="t" style="left:250.70px;top:267.82px;font-size:8.3px;line-height:11px;transform:scaleX(1.0188);color:#3b79ba;-webkit-text-stroke:0.15px currentColor;">encounter</div>
<div class="t" style="left:336.90px;top:179.92px;font-size:8.3px;line-height:11px;transform:scaleX(0.9829);color:#3b79ba;-webkit-text-stroke:0.15px currentColor;">track claim status</div>
<div class="t" style="left:359.80px;top:194.22px;font-size:8.3px;line-height:11px;color:#3b79ba;-webkit-text-stroke:0.15px currentColor;">send</div>
<div class="t" style="left:357.30px;top:204.12px;font-size:8.3px;line-height:11px;transform:scaleX(0.9781);color:#3b79ba;-webkit-text-stroke:0.15px currentColor;">claims</div>
<div class="t" style="left:423.50px;top:195.72px;font-size:8.3px;line-height:11px;transform:scaleX(1.0093);color:#3b79ba;-webkit-text-stroke:0.15px currentColor;">receive</div>
<div class="t" style="left:421.00px;top:205.22px;font-size:8.3px;line-height:11px;transform:scaleX(1.0054);color:#3b79ba;-webkit-text-stroke:0.15px currentColor;">payment</div>
<div class="t" style="left:346.20px;top:275.62px;font-size:8.3px;line-height:11px;transform:scaleX(1.0084);color:#3b79ba;-webkit-text-stroke:0.15px currentColor;">send patient</div>
<div class="t" style="left:349.00px;top:285.62px;font-size:8.3px;line-height:11px;transform:scaleX(0.9854);color:#3b79ba;-webkit-text-stroke:0.15px currentColor;">statements</div>
<div class="t" style="left:415.00px;top:285.32px;font-size:8.3px;line-height:11px;transform:scaleX(0.9734);color:#3b79ba;-webkit-text-stroke:0.15px currentColor;">issue refund</div>
<div class="t" style="left:507.70px;top:243.62px;font-size:8.3px;line-height:11px;transform:scaleX(0.9766);color:#3b79ba;-webkit-text-stroke:0.15px currentColor;">generate</div>
<div class="t" style="left:510.70px;top:253.82px;font-size:8.3px;line-height:11px;transform:scaleX(1.0067);color:#3b79ba;-webkit-text-stroke:0.15px currentColor;">reports</div>
<div class="t" style="left:689.18px;top:212.51px;font-size:24.5px;line-height:32px;color:#0c5aa6;-webkit-text-stroke:0;">4</div>
<div class="t" style="left:681.40px;top:247.39px;font-size:11px;line-height:14px;font-weight:700;transform:scaleX(0.9471);color:#0c5aa6;-webkit-text-stroke:0;">DAYS</div>
<div class="t" style="left:598.00px;top:300.24px;font-size:9.4px;line-height:12px;transform:scaleX(0.9263);color:#3864a3;-webkit-text-stroke:0.1px currentColor;">What is Payment Velocity?</div>
<div class="t" style="left:741.00px;top:300.24px;font-size:9.4px;line-height:12px;transform:scaleX(0.9470);color:#3864a3;-webkit-text-stroke:0.1px currentColor;">Full Report ...</div>
<div class="t" style="left:183.80px;top:355.69px;font-size:11.0px;line-height:14px;transform:scaleX(1.0102);color:#262626;-webkit-text-stroke:0.1px currentColor;">Before you start billing for services...</div>
<div class="t" style="left:191.60px;top:373.19px;font-size:11.0px;line-height:14px;transform:scaleX(1.0272);color:#262626;-webkit-text-stroke:0.1px currentColor;">Enter the </div>
<div class="t" style="left:240.60px;top:373.19px;font-size:11.0px;line-height:14px;transform:scaleX(1.0058);color:#45669f;-webkit-text-stroke:0.1px currentColor;">Practice Information</div>
<div class="t" style="left:339.00px;top:373.19px;font-size:11.0px;line-height:14px;transform:scaleX(1.0130);color:#262626;-webkit-text-stroke:0.1px currentColor;"> for the medical practice.</div>
<div class="t" style="left:191.60px;top:390.49px;font-size:11.0px;line-height:14px;transform:scaleX(1.0129);color:#262626;-webkit-text-stroke:0.1px currentColor;">Configure the </div>
<div class="t" style="left:261.60px;top:390.49px;font-size:11.0px;line-height:14px;transform:scaleX(0.9743);color:#45669f;-webkit-text-stroke:0.1px currentColor;">Electronic Claims Options</div>
<div class="t" style="left:384.30px;top:390.49px;font-size:11.0px;line-height:14px;transform:scaleX(1.0122);color:#262626;-webkit-text-stroke:0.1px currentColor;"> for the medical practice.</div>
<div class="t" style="left:191.60px;top:407.89px;font-size:11.0px;line-height:14px;transform:scaleX(1.0129);color:#262626;-webkit-text-stroke:0.1px currentColor;">Configure the </div>
<div class="t" style="left:261.60px;top:407.89px;font-size:11.0px;line-height:14px;transform:scaleX(0.9959);color:#45669f;-webkit-text-stroke:0.1px currentColor;">Patient Statement Options</div>
<div class="t" style="left:389.50px;top:407.89px;font-size:11.0px;line-height:14px;transform:scaleX(1.0155);color:#262626;-webkit-text-stroke:0.1px currentColor;"> for the medical practice.</div>
<div class="t" style="left:183.80px;top:433.39px;font-size:11.0px;line-height:14px;transform:scaleX(1.0152);color:#262626;-webkit-text-stroke:0.1px currentColor;">As part of your daily billing activities...</div>
<div class="t" style="left:191.60px;top:450.59px;font-size:11.0px;line-height:14px;transform:scaleX(1.0097);color:#262626;-webkit-text-stroke:0.1px currentColor;">You have </div>
<div class="t" style="left:240.60px;top:450.59px;font-size:11.0px;line-height:14px;transform:scaleX(0.9780);color:#45669f;-webkit-text-stroke:0.1px currentColor;">2 Encounters</div>
<div class="t" style="left:304.00px;top:450.59px;font-size:11.0px;line-height:14px;transform:scaleX(1.0478);color:#262626;-webkit-text-stroke:0.1px currentColor;"> to review.</div>
<div class="t" style="left:191.60px;top:467.89px;font-size:11.0px;line-height:14px;transform:scaleX(1.0097);color:#262626;-webkit-text-stroke:0.1px currentColor;">You have </div>
<div class="t" style="left:240.60px;top:467.89px;font-size:11.0px;line-height:14px;transform:scaleX(0.9604);color:#45669f;-webkit-text-stroke:0.1px currentColor;">2 Claims</div>
<div class="t" style="left:281.70px;top:467.89px;font-size:11.0px;line-height:14px;transform:scaleX(1.0165);color:#262626;-webkit-text-stroke:0.1px currentColor;"> to send.</div>
<div class="t" style="left:191.60px;top:485.29px;font-size:11.0px;line-height:14px;transform:scaleX(1.0097);color:#262626;-webkit-text-stroke:0.1px currentColor;">You have </div>
<div class="t" style="left:240.60px;top:485.29px;font-size:11.0px;line-height:14px;transform:scaleX(0.9922);color:#45669f;-webkit-text-stroke:0.1px currentColor;">2 Draft Encounters</div>
<div class="t" style="left:331.60px;top:485.29px;font-size:11.0px;line-height:14px;transform:scaleX(1.0111);color:#262626;-webkit-text-stroke:0.1px currentColor;"> to submit to the Business Office.</div>
<div class="t" style="left:191.60px;top:502.59px;font-size:11.0px;line-height:14px;transform:scaleX(1.0097);color:#262626;-webkit-text-stroke:0.1px currentColor;">You have </div>
<div class="t" style="left:240.60px;top:502.59px;font-size:11.0px;line-height:14px;transform:scaleX(0.9792);color:#45669f;-webkit-text-stroke:0.1px currentColor;">5 Online Payments</div>
<div class="t" style="left:331.60px;top:502.59px;font-size:11.0px;line-height:14px;transform:scaleX(1.0427);color:#262626;-webkit-text-stroke:0.1px currentColor;"> to apply.</div>
<div class="t" style="left:183.80px;top:528.39px;font-size:11.0px;line-height:14px;transform:scaleX(1.0180);color:#262626;-webkit-text-stroke:0.1px currentColor;">As part of your monthly closing activities...</div>
<div class="t" style="left:191.60px;top:545.69px;font-size:11.0px;line-height:14px;transform:scaleX(1.0171);color:#262626;-webkit-text-stroke:0.1px currentColor;">You should review monthly </div>
<div class="t" style="left:327.40px;top:545.69px;font-size:11.0px;line-height:14px;transform:scaleX(0.9577);color:#45669f;-webkit-text-stroke:0.1px currentColor;">Reports</div>
<div class="t" style="left:364.30px;top:545.69px;font-size:11.0px;line-height:14px;transform:scaleX(1.0101);color:#262626;-webkit-text-stroke:0.1px currentColor;"> for omissions or errors.</div>
<div class="t" style="left:191.60px;top:563.19px;font-size:11.0px;line-height:14px;transform:scaleX(1.0156);color:#262626;-webkit-text-stroke:0.1px currentColor;">You should review the </div>
<div class="t" style="left:303.60px;top:563.19px;font-size:11.0px;line-height:14px;transform:scaleX(0.9701);color:#45669f;-webkit-text-stroke:0.1px currentColor;">Report Closing Date</div>
<div class="t" style="left:399.70px;top:563.19px;font-size:11.0px;line-height:14px;color:#262626;-webkit-text-stroke:0.1px currentColor;">.</div>
<div class="t" style="left:586.70px;top:353.60px;font-size:10.4px;line-height:14px;transform:scaleX(0.9860);-webkit-text-stroke:0.12px currentColor;">Indicator</div>
<div class="t" style="left:726.70px;top:353.40px;font-size:10.4px;line-height:14px;transform:scaleX(0.9578);-webkit-text-stroke:0.12px currentColor;">Amount</div>
<div class="t" style="left:774.70px;top:353.40px;font-size:10.4px;line-height:14px;transform:scaleX(0.9539);-webkit-text-stroke:0.12px currentColor;">% Last</div>
<div class="t" style="left:586.70px;top:372.60px;font-size:10.4px;line-height:14px;transform:scaleX(0.9221);color:#45669f;-webkit-text-stroke:0.12px currentColor;">Procedures</div>
<div class="t" style="left:755.62px;top:372.80px;font-size:10.4px;line-height:14px;transform:scaleX(0.9300);color:#52709f;-webkit-text-stroke:0.12px currentColor;">1</div>
<div class="t" style="left:790.72px;top:372.80px;font-size:10.4px;line-height:14px;transform:scaleX(0.9500);color:#52709f;-webkit-text-stroke:0.12px currentColor;">0%</div>
<div class="t" style="left:586.70px;top:390.80px;font-size:10.4px;line-height:14px;transform:scaleX(0.9139);color:#45669f;-webkit-text-stroke:0.12px currentColor;">Charges</div>
<div class="t" style="left:739.49px;top:391.00px;font-size:10.4px;line-height:14px;transform:scaleX(0.9300);color:#52709f;-webkit-text-stroke:0.12px currentColor;">$100</div>
<div class="t" style="left:773.98px;top:391.00px;font-size:10.4px;line-height:14px;transform:scaleX(0.9500);color:#52709f;-webkit-text-stroke:0.12px currentColor;">+900%</div>
<div class="t" style="left:586.70px;top:409.00px;font-size:10.4px;line-height:14px;transform:scaleX(0.9495);color:#45669f;-webkit-text-stroke:0.12px currentColor;">Adjustments</div>
<div class="t" style="left:744.87px;top:409.20px;font-size:10.4px;line-height:14px;transform:scaleX(0.9300);color:#52709f;-webkit-text-stroke:0.12px currentColor;">$50</div>
<div class="t" style="left:790.72px;top:409.20px;font-size:10.4px;line-height:14px;transform:scaleX(0.9500);color:#52709f;-webkit-text-stroke:0.12px currentColor;">0%</div>
<div class="t" style="left:586.70px;top:427.20px;font-size:10.4px;line-height:14px;transform:scaleX(0.9224);color:#45669f;-webkit-text-stroke:0.12px currentColor;">Receipts</div>
<div class="t" style="left:744.87px;top:427.40px;font-size:10.4px;line-height:14px;transform:scaleX(0.9300);color:#52709f;-webkit-text-stroke:0.12px currentColor;">$50</div>
<div class="t" style="left:781.95px;top:427.40px;font-size:10.4px;line-height:14px;transform:scaleX(0.9500);color:#52709f;-webkit-text-stroke:0.12px currentColor;">-98%</div>
<div class="t" style="left:586.70px;top:445.40px;font-size:10.4px;line-height:14px;transform:scaleX(0.9276);color:#45669f;-webkit-text-stroke:0.12px currentColor;">Refunds</div>
<div class="t" style="left:750.25px;top:445.60px;font-size:10.4px;line-height:14px;transform:scaleX(0.9300);color:#52709f;-webkit-text-stroke:0.12px currentColor;">$0</div>
<div class="t" style="left:790.72px;top:445.60px;font-size:10.4px;line-height:14px;transform:scaleX(0.9500);color:#52709f;-webkit-text-stroke:0.12px currentColor;">0%</div>
<div class="t" style="left:586.70px;top:463.60px;font-size:10.4px;line-height:14px;transform:scaleX(0.9227);color:#45669f;-webkit-text-stroke:0.12px currentColor;">A/R Balance</div>
<div class="t" style="left:744.87px;top:463.80px;font-size:10.4px;line-height:14px;transform:scaleX(0.9300);color:#52709f;-webkit-text-stroke:0.12px currentColor;">$60</div>
<div class="t" style="left:790.72px;top:463.80px;font-size:10.4px;line-height:14px;transform:scaleX(0.9500);color:#52709f;-webkit-text-stroke:0.12px currentColor;">0%</div>
<div class="t" style="left:586.70px;top:481.80px;font-size:10.4px;line-height:14px;transform:scaleX(0.9632);color:#45669f;-webkit-text-stroke:0.12px currentColor;">Days in A/R</div>
<div class="t" style="left:755.62px;top:482.00px;font-size:10.4px;line-height:14px;transform:scaleX(0.9300);color:#52709f;-webkit-text-stroke:0.12px currentColor;">0</div>
<div class="t" style="left:790.72px;top:482.00px;font-size:10.4px;line-height:14px;transform:scaleX(0.9500);color:#52709f;-webkit-text-stroke:0.12px currentColor;">0%</div>
<div class="t" style="left:586.70px;top:500.00px;font-size:10.4px;line-height:14px;transform:scaleX(0.9364);color:#45669f;-webkit-text-stroke:0.12px currentColor;">Days Revenue Outstanding</div>
<div class="t" style="left:755.62px;top:500.20px;font-size:10.4px;line-height:14px;transform:scaleX(0.9300);color:#52709f;-webkit-text-stroke:0.12px currentColor;">4</div>
<div class="t" style="left:790.72px;top:500.20px;font-size:10.4px;line-height:14px;transform:scaleX(0.9500);color:#52709f;-webkit-text-stroke:0.12px currentColor;">0%</div>
<div class="t" style="left:586.70px;top:518.20px;font-size:10.4px;line-height:14px;transform:scaleX(0.9486);color:#45669f;-webkit-text-stroke:0.12px currentColor;">Days to Bill</div>
<div class="t" style="left:755.62px;top:518.40px;font-size:10.4px;line-height:14px;transform:scaleX(0.9300);color:#52709f;-webkit-text-stroke:0.12px currentColor;">0</div>
<div class="t" style="left:790.72px;top:518.40px;font-size:10.4px;line-height:14px;transform:scaleX(0.9500);color:#52709f;-webkit-text-stroke:0.12px currentColor;">0%</div>
<div class="t" style="left:607.70px;top:542.70px;font-size:10.4px;line-height:14px;transform:scaleX(0.9346);color:#3a2020;-webkit-text-stroke:0.12px currentColor;">Month</div>
<div class="t" style="left:687.00px;top:542.70px;font-size:10.4px;line-height:14px;transform:scaleX(0.9366);color:#45669f;-webkit-text-stroke:0.12px currentColor;">Quarter</div>
<div class="t" style="left:768.00px;top:542.70px;font-size:10.4px;line-height:14px;transform:scaleX(0.9429);color:#45669f;-webkit-text-stroke:0.12px currentColor;">Year</div>
<div class="t" style="left:644.00px;top:568.23px;font-size:8.0px;line-height:10px;transform:scaleX(0.9796);color:#333;">Last Updated: 8/1/19 4:32 AM</div>
</body></html>
